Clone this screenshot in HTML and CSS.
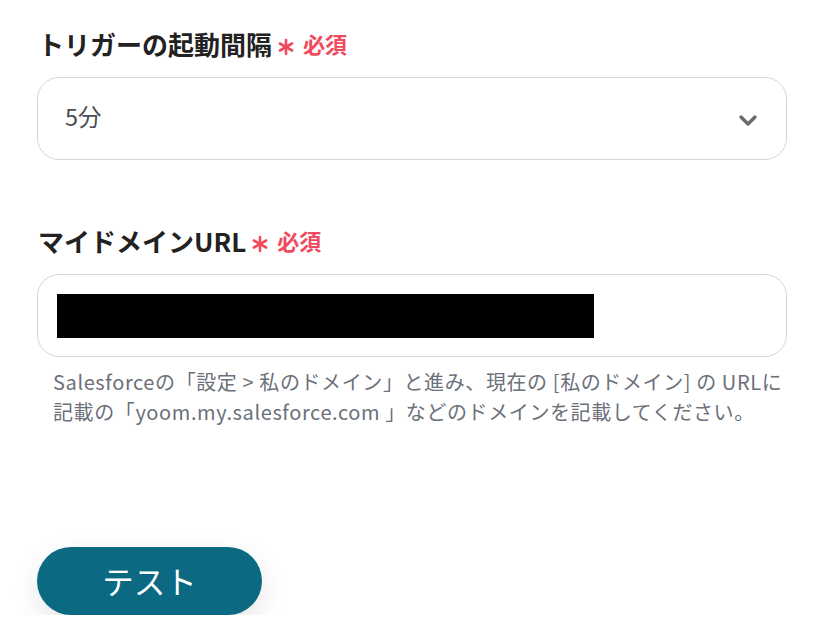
FILE: index.html
```html
<!DOCTYPE html>
<html lang="ja">
<head>
  <meta charset="UTF-8">
  <meta name="viewport" content="width=device-width, initial-scale=1.0">
  <title>トリガー設定</title>
  <link rel="stylesheet" href="styles.css">
</head>
<body>
  <div class="form">
    <div class="field">
      <label class="label">トリガーの起動間隔<span class="req"><svg class="star" width="18" height="18" viewBox="0 0 18 18"><g stroke="#f04a5e" stroke-width="2.6" stroke-linecap="round"><path d="M9 2 V16"/><path d="M2.9 5.5 L15.1 12.5"/><path d="M2.9 12.5 L15.1 5.5"/></g></svg>必須</span></label>
      <div class="box select">
        <span class="value">5分</span>
        <svg class="chev" width="20" height="14" viewBox="0 0 20 14">
          <path d="M3 3 L10 10 L17 3" fill="none" stroke="#6b6b6b" stroke-width="3.4" stroke-linecap="round" stroke-linejoin="round"/>
        </svg>
      </div>
    </div>

    <div class="field second">
      <label class="label">マイドメインURL<span class="req"><svg class="star" width="18" height="18" viewBox="0 0 18 18"><g stroke="#f04a5e" stroke-width="2.6" stroke-linecap="round"><path d="M9 2 V16"/><path d="M2.9 5.5 L15.1 12.5"/><path d="M2.9 12.5 L15.1 5.5"/></g></svg>必須</span></label>
      <div class="box input">
        <div class="mask"></div>
      </div>
      <p class="help">Salesforceの「設定 &gt; 私のドメイン」と進み、現在の [私のドメイン] の URLに<br>記載の「yoom.my.salesforce.com 」などのドメインを記載してください。</p>
    </div>

    <button class="btn">テスト</button>
  </div>
</body>
</html>
```

FILE: styles.css
```css
body {
  margin: 0;
  background: #fff;
  font-family: "Noto Sans CJK JP", "Noto Sans", sans-serif;
  color: #333;
}

.form {
  padding: 22px 40px 0 37px;
  width: 750px;
}

.label {
  display: flex;
  align-items: center;
  font-size: 26px;
  font-weight: bold;
  color: #222;
  margin-left: 1px;
  height: 42px;
}

.req {
  display: flex;
  align-items: center;
  color: #f04a5e;
  font-size: 22px;
  margin-left: 5px;
}

.star {
  margin-right: 8px;
  position: relative;
  top: 4px;
}

.box {
  margin-top: 13px;
  height: 81px;
  border: 1px solid #d3d6dc;
  border-radius: 22px;
  display: flex;
  align-items: center;
  box-sizing: content-box;
}

.select {
  justify-content: space-between;
  padding: 0 28px 0 27px;
}

.value {
  font-size: 23.5px;
  color: #4b4f56;
  margin-top: -6px;
}

.chev {
  margin-top: 4px;
}

.second {
  margin-top: 59px;
}

.input {
  padding: 0 19px;
}

.mask {
  width: 537px;
  height: 44px;
  background: #000;
}

.help {
  margin: 10px 0 0 16px;
  font-size: 20px;
  letter-spacing: 0.6px;
  line-height: 30px;
  color: #6b7079;
  white-space: nowrap;
}

.btn {
  margin-top: 120px;
  width: 225px;
  height: 68px;
  border: none;
  border-radius: 34px;
  background: #0b6981;
  color: #fff;
  font-family: inherit;
  font-size: 31.5px;
  padding-bottom: 4px;
  box-shadow: 0 10px 28px rgba(0, 0, 0, 0.1);
}
```
